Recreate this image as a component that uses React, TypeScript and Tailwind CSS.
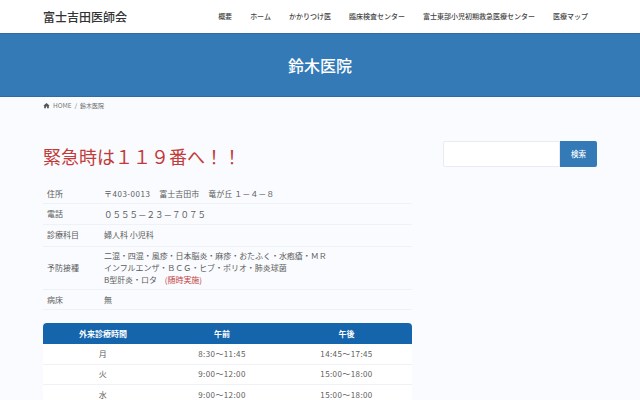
const font = { fontFamily: '"Noto Sans CJK JP", "Noto Sans", sans-serif' };
const nav = ["概要", "ホーム", "かかりつけ医", "臨床検査センター", "富士東部小児初期救急医療センター", "医療マップ"];
const hours = [
  ["月", "8:30～11:45", "14:45～17:45"],
  ["火", "9:00～12:00", "15:00～18:00"],
  ["水", "9:00～12:00", "15:00～18:00"],
];

function InfoRow({ label, children, h }: { label: string; children: React.ReactNode; h: string }) {
  return (
    <div className={`flex items-center border-b border-[#eef1f5] pl-[4px] text-[8px] text-[#5c5c5c] ${h}`}>
      <div className="w-[57px] shrink-0">{label}</div>
      <div>{children}</div>
    </div>
  );
}

export default function App() {
  return (
    <div className="h-[400px] w-[640px] overflow-hidden bg-[#f9fbfe]" style={font}>
      <header className="flex h-[33px] items-center justify-between bg-white pl-[43px] pr-[52px]">
        <div className="text-[12px] font-medium text-[#333]">富士吉田医師会</div>
        <nav className="flex gap-[18px] text-[7px] font-medium text-[#444]">
          {nav.map((n) => (
            <span key={n}>{n}</span>
          ))}
        </nav>
      </header>
      <div className="flex h-[64px] items-center justify-center border-y border-[#2e6da4] bg-[#337ab7] text-[16px] font-medium text-white">
        鈴木医院
      </div>
      <div className="flex h-[17px] items-center gap-[3px] pl-[43px] text-[6px] text-[#666]">
        <svg width="7" height="7" viewBox="0 0 24 24" fill="#555">
          <path d="M12 3 1 13h3v8h6v-6h4v6h6v-8h3z" />
        </svg>
        <span className="text-[6.5px] text-[#777]">HOME</span>
        <span>/</span>
        <span>鈴木医院</span>
      </div>
      <main className="flex items-start pl-[43px] pr-[43px] pt-[27px]">
        <div className="w-[369px]">
          <h1 className="text-[18px] leading-[30px] text-[#c23b3b]">緊急時は１１９番へ！！</h1>
          <div className="mt-[13px]">
            <InfoRow label="住所" h="h-[20px]">
              <span className="tracking-[0.5px]">〒403-0013</span>
              <span className="ml-[9px]">富士吉田市</span>
              <span className="ml-[9px]">竜が丘 １－４－８</span>
            </InfoRow>
            <InfoRow label="電話" h="h-[21px]">
              <span className="text-[8.5px]">０５５５－２３－７０７５</span>
            </InfoRow>
            <InfoRow label="診療科目" h="h-[22px] pb-[1px]">婦人科 小児科</InfoRow>
            <InfoRow label="予防接種" h="h-[43px]">
              <div className="leading-[12px] tracking-[-0.05px]">
                <div>二混・四混・風疹・日本脳炎・麻疹・おたふく・水疱瘡・ＭＲ</div>
                <div>インフルエンザ・ＢＣＧ・ヒブ・ポリオ・肺炎球菌</div>
                <div>
                  B型肝炎・ロタ　<span className="text-[#c23b3b]">(随時実施)</span>
                </div>
              </div>
            </InfoRow>
            <InfoRow label="病床" h="h-[20px]">無</InfoRow>
          </div>
          <div className="mt-[13px] text-[8px] text-[#5c5c5c]">
            <div className="grid h-[21px] grid-cols-[120px_118px_131px] items-center rounded-t-[4px] bg-[#1565ad] text-center font-bold text-white">
              <span>外来診療時間</span>
              <span>午前</span>
              <span>午後</span>
            </div>
            {hours.map((r) => (
              <div key={r[0]} className="grid h-[20.5px] grid-cols-[120px_118px_131px] items-center border-b border-[#eef1f5] bg-white text-center tracking-[0.4px]">
                {r.map((c) => (
                  <span key={c}>{c}</span>
                ))}
              </div>
            ))}
          </div>
        </div>
        <div className="ml-[31px] flex h-[26px] w-[154px]">
          <div className="flex-1 rounded-l-[2px] border border-[#e8ebef] bg-white" />
          <button className="w-[37px] rounded-r-[2px] bg-[#337ab7] text-[7.5px] font-medium text-white">検索</button>
        </div>
      </main>
    </div>
  );
}
